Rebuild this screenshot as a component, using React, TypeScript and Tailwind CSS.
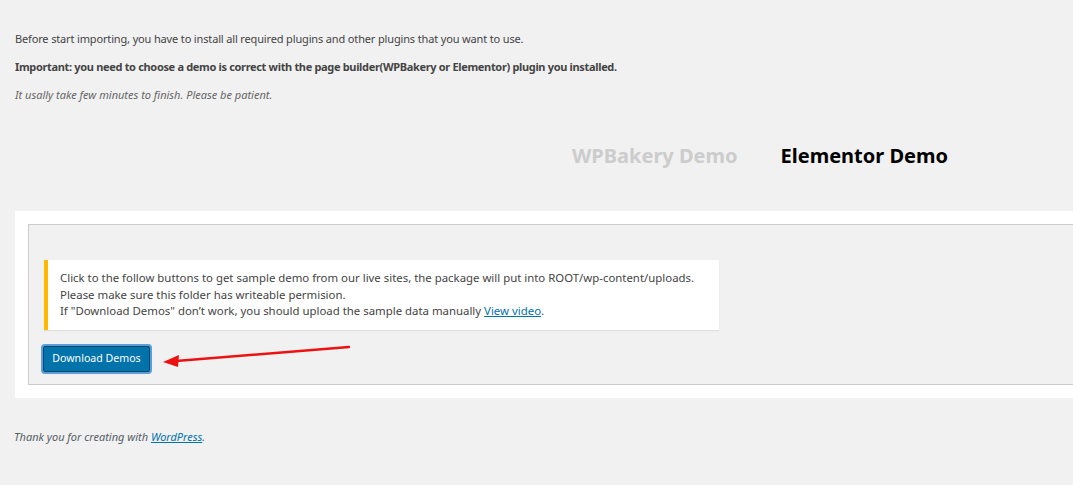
export default function App() {
  return (
    <div className="relative min-h-[485px] w-[1073px] overflow-hidden bg-[#f1f1f1] font-['Noto_Sans',sans-serif] text-[#444]">
      <div className="pl-[15px] pt-[31px]">
        <p className="text-[11px] leading-[16px] tracking-[-0.15px]">
          Before start importing, you have to install all required plugins and other plugins that you want to use.
        </p>
        <p className="mt-[12px] text-[11px] font-bold leading-[16px] tracking-[-0.33px]">
          Important: you need to choose a demo is correct with the page builder(WPBakery or Elementor) plugin you installed.
        </p>
        <p className="mt-[12px] text-[11px] italic leading-[16px] text-[#666]">
          It usally take few minutes to finish. Please be patient.
        </p>

        <div className="mt-[39px] flex gap-[43px] pl-[557px]">
          <span className="text-[20px] font-bold leading-[28px] text-[#cccccc]">WPBakery Demo</span>
          <span className="text-[20px] font-bold leading-[28px] text-black">Elementor Demo</span>
        </div>

        <section className="mt-[41px] w-[1100px] bg-white p-[13px]">
          <div className="border border-[#cccccc] bg-[#f1f1f1] pb-[10px] pl-[15px] pt-[35px]">
            <div className="w-[675px] border-l-4 border-[#ffb900] bg-white px-[12px] py-[10px] text-[11.4px] leading-[16.5px] shadow-[0_1px_1px_rgba(0,0,0,0.08)]">
              <p>Click to the follow buttons to get sample demo from our live sites, the package will put into ROOT/wp-content/uploads.</p>
              <p>Please make sure this folder has writeable permision.</p>
              <p>
                If "Download Demos" don’t work, you should upload the sample data manually{" "}
                <a className="text-[#0073aa] underline">View video</a>.
              </p>
            </div>
            <button className="ml-[-3px] mt-[14px] h-[30px] w-[111px] rounded-[4px] border-2 border-[#5b9dd9] bg-[#0073aa] text-[10.6px] text-white shadow-[inset_0_0_0_1px_#00446b]">
              Download Demos
            </button>
          </div>
        </section>

        <p className="ml-[-1px] mt-[31px] text-[11px] italic leading-[16px] text-[#555d66]">
          Thank you for creating with <a className="text-[#0073aa] underline">WordPress</a>.
        </p>
      </div>

      <svg className="absolute left-0 top-0" width="1073" height="485" viewBox="0 0 1073 485">
        <line x1="349" y1="347" x2="176" y2="361" stroke="#ee1111" strokeWidth="2.5" strokeLinecap="round" />
        <polygon points="163,362 179,355 178,367" fill="#ee1111" />
      </svg>
    </div>
  );
}
